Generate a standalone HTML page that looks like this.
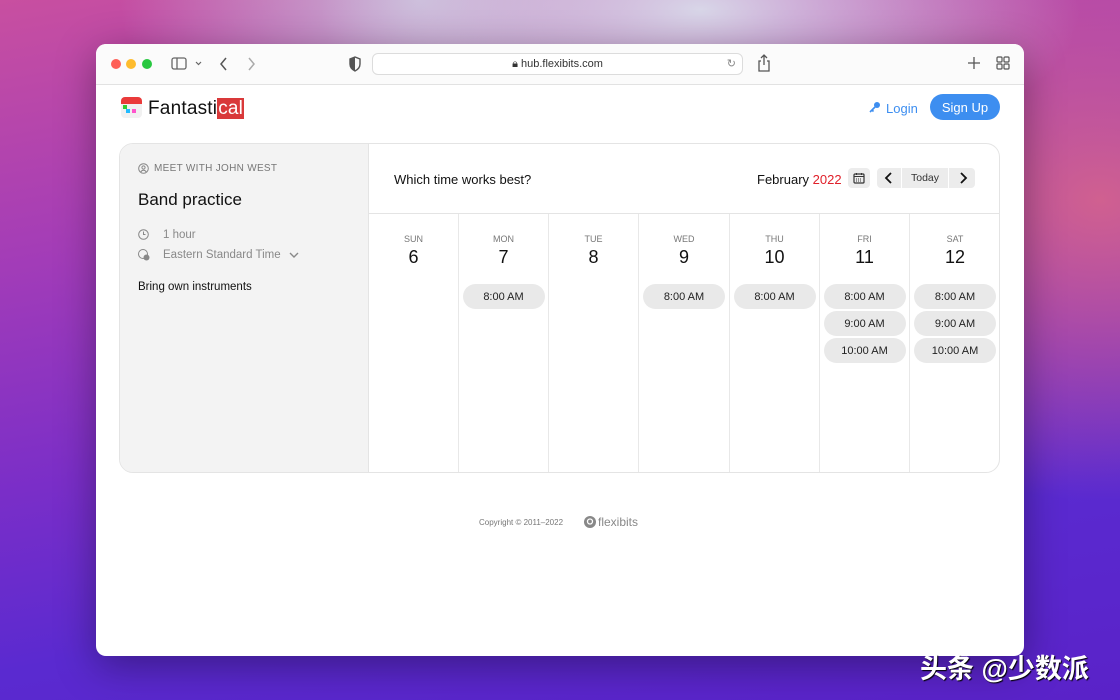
<!DOCTYPE html>
<html><head><meta charset="utf-8"><style>
*{box-sizing:border-box;margin:0;padding:0}
body{width:1120px;height:700px;overflow:hidden;position:relative;font-family:"Liberation Sans",sans-serif;
background:
radial-gradient(ellipse 380px 160px at 700px 10px,#d8d6e8 0%,rgba(216,214,232,0) 100%),
radial-gradient(ellipse 300px 200px at 420px 0px,#c9b8d8 0%,rgba(201,184,216,0) 100%),
radial-gradient(ellipse 400px 300px at 1100px 200px,#d06090 0%,rgba(208,96,144,0) 100%),
linear-gradient(170deg,#c84fa0 0%,#a23cb8 30%,#7a2ec8 55%,#5a2ad0 75%,#5a22c8 100%);}
.abs{position:absolute}
.win{position:absolute;left:96px;top:44px;width:928px;height:612px;background:#fff;border-radius:10px;overflow:hidden;box-shadow:0 10px 40px rgba(0,0,0,.35)}
.tb{position:absolute;left:0;top:0;width:928px;height:41px;background:#fbfbfb;border-bottom:1px solid #e2e2e2}
.dot{position:absolute;top:15px;width:10px;height:10px;border-radius:50%}
.url{position:absolute;left:276px;top:9px;width:371px;height:22px;border:1px solid #dcdcdc;border-radius:6px;background:#fff;font-size:11px;color:#333;text-align:center;line-height:21px}
.card{position:absolute;left:23px;top:99px;width:881px;height:330px;border:1px solid #e4e4e4;border-radius:14px;overflow:hidden}
.left{position:absolute;left:0;top:0;width:249px;height:330px;background:#f3f3f3;border-right:1px solid #e4e4e4}
.col{position:absolute;top:70px;width:90px;height:260px;border-right:1px solid #e8e8e8;text-align:center}
.dn{font-size:9px;color:#777;margin-top:20px}
.dd{font-size:18px;color:#111;margin-top:3px}
.pill{width:82px;height:25px;margin:0 auto 2px;background:#e9e9e9;border-radius:13px;font-size:11px;line-height:26px;color:#222}
</style></head><body>
<div class="win">
 <div class="tb">
  <div class="dot" style="left:15px;background:#fe5f57"></div>
  <div class="dot" style="left:30px;background:#febc2e"></div>
  <div class="dot" style="left:46px;background:#28c840"></div>
  <svg class="abs" style="left:75px;top:12px" width="40" height="16"><rect x="1" y="2" width="14" height="11" rx="2" fill="none" stroke="#666" stroke-width="1.3"/><line x1="6" y1="2" x2="6" y2="13" stroke="#666" stroke-width="1.3"/><path d="M25 6l2.5 2.5L30 6" fill="none" stroke="#666" stroke-width="1.2"/></svg>
  <svg class="abs" style="left:122px;top:12px" width="40" height="16"><path d="M8 2l-5 6 5 6" fill="none" stroke="#555" stroke-width="1.5"/><path d="M31 2l5 6-5 6" fill="none" stroke="#aaa" stroke-width="1.5"/></svg>
  <svg class="abs" style="left:252px;top:12px" width="14" height="16"><path d="M7 1L2 3v5c0 3 2 5.5 5 7 3-1.5 5-4 5-7V3z" fill="none" stroke="#555" stroke-width="1.4"/><path d="M7 1v14c-3-1.5-5-4-5-7V3z" fill="#555"/></svg>
  <div class="url">🔒︎ hub.flexibits.com<span style="position:absolute;right:6px;color:#888">↻</span></div>
  <svg class="abs" style="left:660px;top:10px" width="16" height="20"><path d="M5 7H3v10h10V7h-2M8 1v10M5 4l3-3 3 3" fill="none" stroke="#555" stroke-width="1.3"/></svg>
  <svg class="abs" style="left:871px;top:12px" width="14" height="14"><path d="M7 1v12M1 7h12" stroke="#555" stroke-width="1.3"/></svg>
  <svg class="abs" style="left:900px;top:12px" width="14" height="14"><g fill="none" stroke="#555" stroke-width="1.2"><rect x="1" y="1" width="5" height="5" rx="1"/><rect x="8" y="1" width="5" height="5" rx="1"/><rect x="1" y="8" width="5" height="5" rx="1"/><rect x="8" y="8" width="5" height="5" rx="1"/></g></svg>
 </div>
 <svg class="abs" style="left:25px;top:53px" width="21" height="21"><rect x="0" y="0" width="21" height="21" rx="4" fill="#f1f1f1"/><path d="M0 4a4 4 0 014-4h13a4 4 0 014 4v3H0z" fill="#ea3a3a"/><rect x="2" y="8" width="4" height="4" fill="#3c3"/><rect x="5" y="12" width="4" height="4" fill="#2bf"/><rect x="11" y="12" width="4" height="4" fill="#f5c"/></svg>
 <div class="abs" style="left:52px;top:54px;font-size:19px;color:#111;letter-spacing:.2px">Fantasti<span style="background:#d9393a;color:#fff;padding:0 1px">cal</span></div>
 <svg class="abs" style="left:773px;top:57px" width="12" height="12"><circle cx="8" cy="4" r="3" fill="#3d8ef0"/><path d="M6 6L1 11M3 9l1.5 1.5" stroke="#3d8ef0" stroke-width="1.6"/></svg>
 <div class="abs" style="left:790px;top:57px;font-size:13px;color:#3d8ef0">Login</div>
 <div class="abs" style="left:834px;top:50px;width:70px;height:26px;border-radius:13px;background:#3d8ef0;color:#fff;font-size:13px;text-align:center;line-height:27px">Sign Up</div>
 <div class="card">
  <div class="left">
   <svg class="abs" style="left:18px;top:19px" width="11" height="11"><circle cx="5.5" cy="5.5" r="4.8" fill="none" stroke="#888" stroke-width="1"/><circle cx="5.5" cy="4.5" r="1.6" fill="none" stroke="#888"/><path d="M2.8 9a3 3 0 015.4 0" fill="none" stroke="#888"/></svg>
   <div class="abs" style="left:34px;top:19px;font-size:10px;color:#777;letter-spacing:.3px">MEET WITH JOHN WEST</div>
   <div class="abs" style="left:18px;top:46px;font-size:17px;color:#111">Band practice</div>
   <svg class="abs" style="left:18px;top:85px" width="11" height="11"><circle cx="5.5" cy="5.5" r="4.8" fill="none" stroke="#888"/><path d="M5.5 2.5v3h2" fill="none" stroke="#888"/></svg>
   <div class="abs" style="left:43px;top:85px;font-size:11.5px;color:#888">1 hour</div>
   <svg class="abs" style="left:18px;top:105px" width="12" height="12"><circle cx="5" cy="5" r="4.5" fill="none" stroke="#888"/><circle cx="8.5" cy="8.5" r="3" fill="#888"/></svg>
   <div class="abs" style="left:43px;top:105px;font-size:11.5px;color:#888">Eastern Standard Time</div>
   <svg class="abs" style="left:169px;top:108px" width="10" height="7"><path d="M1 1l4 4 4-4" fill="none" stroke="#888" stroke-width="1.4"/></svg>
   <div class="abs" style="left:18px;top:137px;font-size:11.5px;color:#111">Bring own instruments</div>
  </div>
  <div class="abs" style="left:274px;top:28px;font-size:13px;color:#111">Which time works best?</div>
  <div class="abs" style="left:637px;top:28px;font-size:13px;color:#111">February <span style="color:#e0202a">2022</span></div>
  <div class="abs" style="left:728px;top:24px;width:22px;height:20px;background:#ececec;border-radius:4px"></div>
  <svg class="abs" style="left:733px;top:28px" width="12" height="12"><rect x="1" y="2" width="10" height="9" rx="1" fill="none" stroke="#333" stroke-width="1.2"/><path d="M1 4.5h10M3.5 1v2M8.5 1v2" stroke="#333"/><path d="M3 7h6M3 9h6" stroke="#333" stroke-dasharray="1 1"/></svg>
  <div class="abs" style="left:757px;top:24px;width:98px;height:20px;background:#ececec;border-radius:4px"></div>
  <div class="abs" style="left:781px;top:24px;width:48px;height:20px;border-left:1px solid #fff;border-right:1px solid #fff;font-size:10.5px;color:#333;text-align:center;line-height:21px">Today</div>
  <svg class="abs" style="left:764px;top:28px" width="10" height="12"><path d="M7 1L2 6l5 5" fill="none" stroke="#111" stroke-width="1.8"/></svg>
  <svg class="abs" style="left:838px;top:28px" width="10" height="12"><path d="M3 1l5 5-5 5" fill="none" stroke="#111" stroke-width="1.8"/></svg>
  <div class="abs" style="left:249px;top:69px;width:632px;border-top:1px solid #e4e4e4"></div>
  <div class="col" style="left:249px"><div class="dn">SUN</div><div class="dd">6</div></div>
  <div class="col" style="left:339px"><div class="dn">MON</div><div class="dd">7</div><div style="height:16px"></div><div class="pill">8:00 AM</div></div>
  <div class="col" style="left:429px"><div class="dn">TUE</div><div class="dd">8</div></div>
  <div class="col" style="left:519px;width:91px"><div class="dn">WED</div><div class="dd">9</div><div style="height:16px"></div><div class="pill">8:00 AM</div></div>
  <div class="col" style="left:610px"><div class="dn">THU</div><div class="dd">10</div><div style="height:16px"></div><div class="pill">8:00 AM</div></div>
  <div class="col" style="left:700px"><div class="dn">FRI</div><div class="dd">11</div><div style="height:16px"></div><div class="pill">8:00 AM</div><div class="pill">9:00 AM</div><div class="pill">10:00 AM</div></div>
  <div class="col" style="left:790px;border-right:none"><div class="dn">SAT</div><div class="dd">12</div><div style="height:16px"></div><div class="pill">8:00 AM</div><div class="pill">9:00 AM</div><div class="pill">10:00 AM</div></div>
 </div>
 <div class="abs" style="left:383px;top:474px;font-size:8px;color:#777">Copyright © 2011–2022</div>
 <svg class="abs" style="left:488px;top:472px" width="12" height="12"><circle cx="6" cy="6" r="6" fill="#888"/><circle cx="6" cy="5.5" r="2.5" fill="none" stroke="#fff" stroke-width="1.3"/></svg>
 <div class="abs" style="left:502px;top:471px;font-size:12px;color:#888">flexibits</div>
</div>
<div class="abs" style="left:920px;top:647px;font-size:27px;color:#fff;font-family:'Liberation Sans','Noto Sans CJK SC',sans-serif;text-shadow:1px 1px 1px #000;font-weight:bold;white-space:nowrap">头条 @少数派</div>
</body></html>
